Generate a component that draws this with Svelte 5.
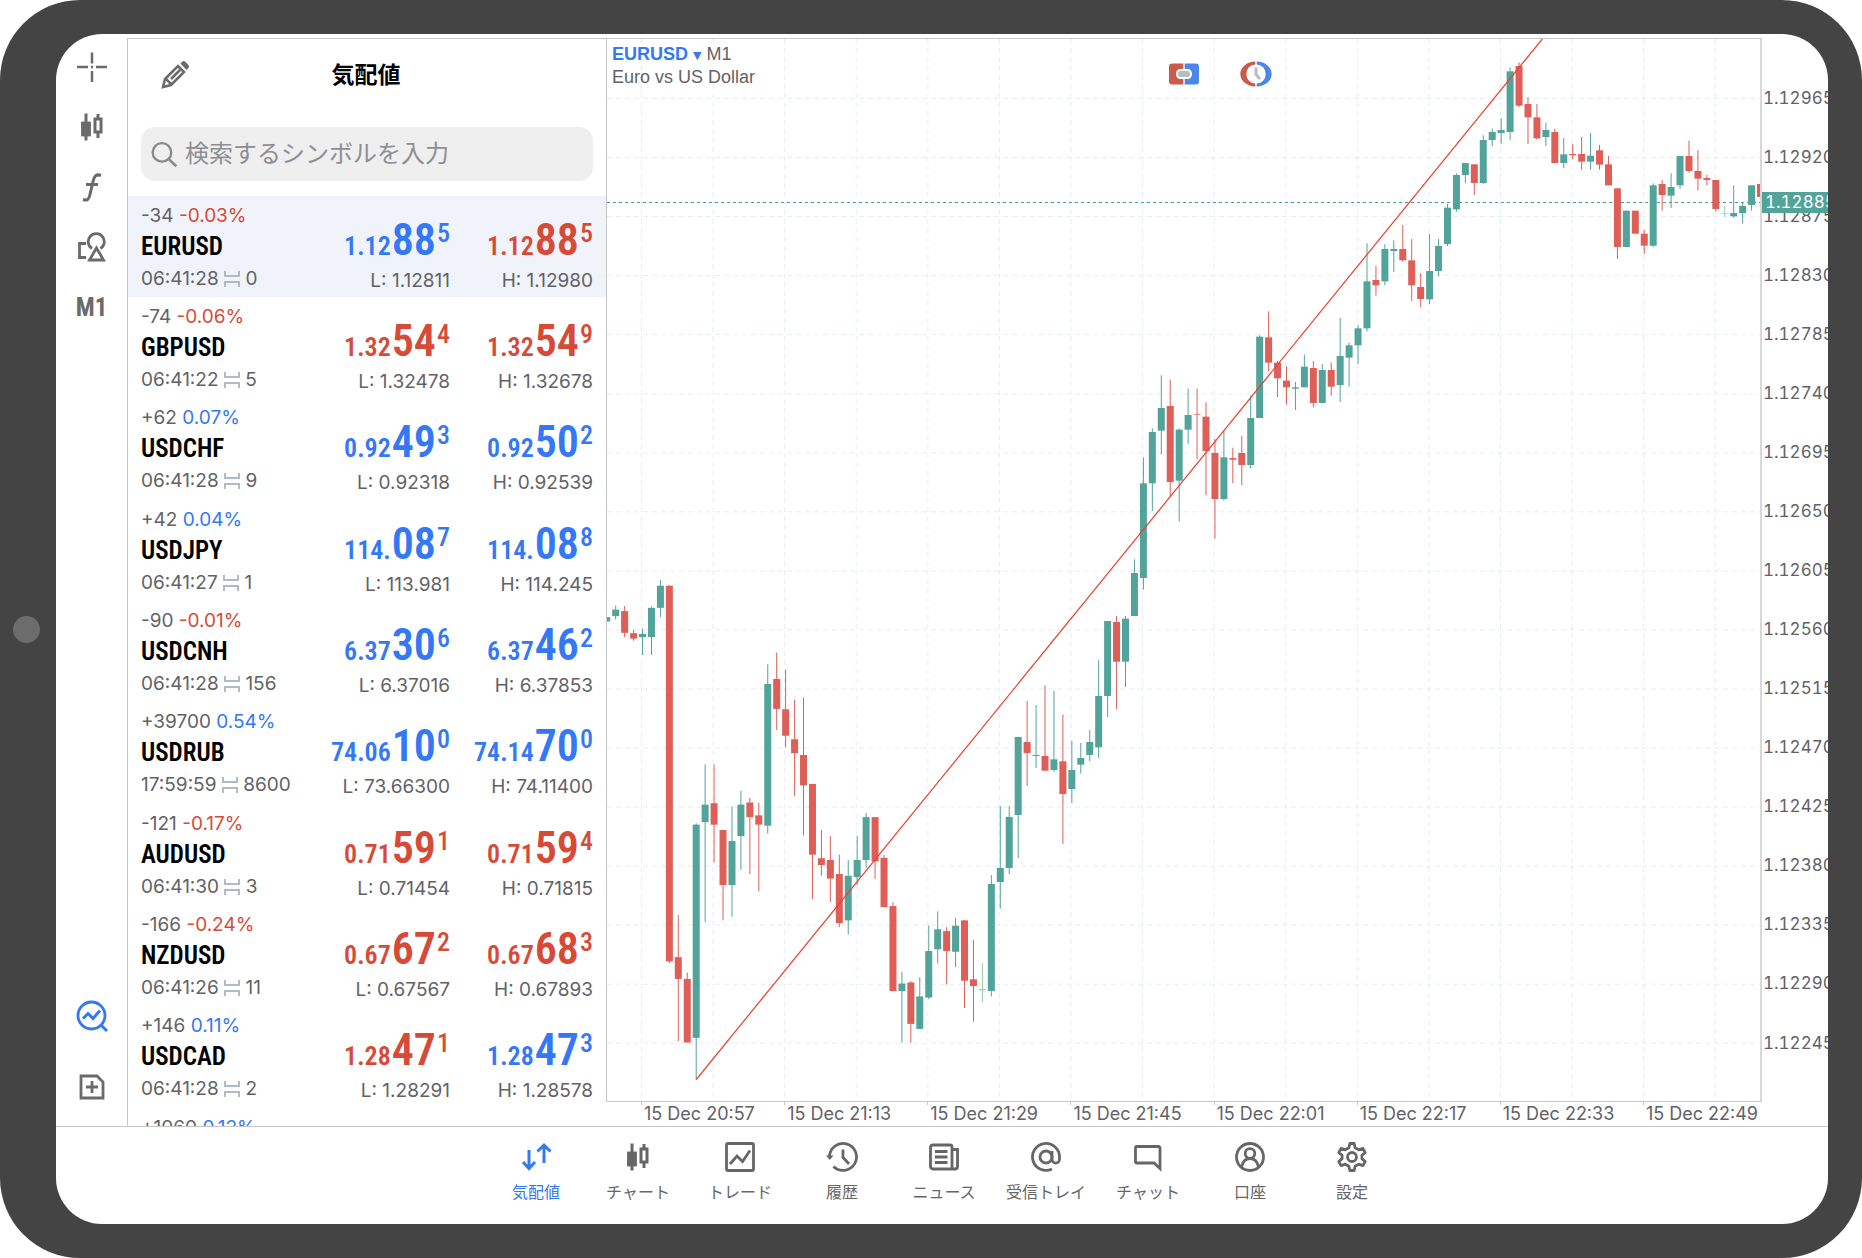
<script lang="ts">
  type Price = [string, string, string, string];
  type Quote = {
    points: string; pct: string; symbol: string; time: string; spread: string;
    bid: Price; ask: Price; low: string; high: string;
  };

  // Price tuples: prefix, large digits, raised digit, direction
  const quotes: Quote[] = [
    { points: '-34', pct: '-0.03%', symbol: 'EURUSD', time: '06:41:28', spread: '0', bid: ['1.12', '88', '5', 'up'], ask: ['1.12', '88', '5', 'down'], low: '1.12811', high: '1.12980' },
    { points: '-74', pct: '-0.06%', symbol: 'GBPUSD', time: '06:41:22', spread: '5', bid: ['1.32', '54', '4', 'down'], ask: ['1.32', '54', '9', 'down'], low: '1.32478', high: '1.32678' },
    { points: '+62', pct: '0.07%', symbol: 'USDCHF', time: '06:41:28', spread: '9', bid: ['0.92', '49', '3', 'up'], ask: ['0.92', '50', '2', 'up'], low: '0.92318', high: '0.92539' },
    { points: '+42', pct: '0.04%', symbol: 'USDJPY', time: '06:41:27', spread: '1', bid: ['114.', '08', '7', 'up'], ask: ['114.', '08', '8', 'up'], low: '113.981', high: '114.245' },
    { points: '-90', pct: '-0.01%', symbol: 'USDCNH', time: '06:41:28', spread: '156', bid: ['6.37', '30', '6', 'up'], ask: ['6.37', '46', '2', 'up'], low: '6.37016', high: '6.37853' },
    { points: '+39700', pct: '0.54%', symbol: 'USDRUB', time: '17:59:59', spread: '8600', bid: ['74.06', '10', '0', 'up'], ask: ['74.14', '70', '0', 'up'], low: '73.66300', high: '74.11400' },
    { points: '-121', pct: '-0.17%', symbol: 'AUDUSD', time: '06:41:30', spread: '3', bid: ['0.71', '59', '1', 'down'], ask: ['0.71', '59', '4', 'down'], low: '0.71454', high: '0.71815' },
    { points: '-166', pct: '-0.24%', symbol: 'NZDUSD', time: '06:41:26', spread: '11', bid: ['0.67', '67', '2', 'down'], ask: ['0.67', '68', '3', 'down'], low: '0.67567', high: '0.67893' },
    { points: '+146', pct: '0.11%', symbol: 'USDCAD', time: '06:41:28', spread: '2', bid: ['1.28', '47', '1', 'down'], ask: ['1.28', '47', '3', 'up'], low: '1.28291', high: '1.28578' }
  ];
  const nextQuote = { points: '+1060', pct: '0.12%' };

  const priceTicks = Array.from({ length: 17 }, (_, i) => (1.12965 - i * 0.00045).toFixed(5));
  const timeTicks = ['20:57', '21:13', '21:29', '21:45', '22:01', '22:17', '22:33', '22:49'];

  // Candle series: each chunk has its own vertical base and resolution.
  // A bar is colour (G/R/L) followed by high, body top, body bottom, low.
  const chunks = [
    { base: 501, unit: 2.8, bars: `G216,216,228,228 G184,195,213,223 R185,199,260,272 R252,261,276,282 G248,263,272,322 G186,190,272,322 G112,128,190,216 R127,128,1180,1185 R1050,1168,1229,1403 R1211,1229,1407,1407 G793,797,1394,1511 G628,741,790,1070 R628,737,797,903 R812,812,966,1065 G746,843,966,1055 G702,741,829,924 R722,735,776,935 R735,771,797,984 G348,403,800,822 R315,389,473,532 R363,474,548,581 R447,558,597,717 R441,602,687,827 R683,683,881,1006 R812,891,910,940 R829,896,948,1014 R881,935,1073,1084 G896,940,1065,1105 G829,896,944,966 G764,776,896,918 R776,776,900,949 R882,890,1028,1028 R1014,1025,1263,1263 G1209,1242,1263,1408 R1235,1239,1355,1408 G1224,1278,1369,1369 G1079,1151,1281,1286 G1040,1090,1146,1186 R1084,1095,1151,1245 G1058,1080,1153,1196 R1065,1065,1234,1310 R1119,1230,1249,1349 L1185,1258,1261,1293 G938,963,1263,1278` },
    { base: 601, unit: 3, bars: `G498,684,726,806 G498,531,684,702 G291,291,525,654 R183,306,339,438 G195,345,348,384 R136,348,392,392 G152,358,390,396 R223,364,462,612 G302,390,447,489 G309,354,374,401 G270,306,345,364 G60,168,322,354` },
    { base: 251, unit: 3, bars: `G993,993,1218,1281 R978,996,1115,1258 G978,986,1115,1191 G808,849,978,978 G502,580,864,899 G415,426,580,663 G256,354,422,494 R269,348,576,619 G415,419,572,695 G296,375,419,462 R296,373,375,508 R337,380,483,616 R447,489,627,746 G422,502,627,632 R473,504,509,580 R438,489,525,585 G316,384,525,535 G136,140,384,384 R64,142,218,245 R213,218,265,321 R229,272,292,344 G276,292,296,360 G194,230,292,292 R213,234,339,352 G222,240,339,339 R217,240,290,317 G84,198,285,336 G158,166,203,290 G105,115,166,222` },
    { base: -9, unit: 3, bars: `G640,754,895,904 R708,750,766,797 G643,657,754,766 G631,657,663,726 R585,657,691,695 R627,691,766,813 R730,771,807,832 G612,723,808,822 G627,648,723,739 G522,533,642,648 G430,435,538,545 G399,399,435,460 R403,403,459,495 G316,330,459,462 G296,306,330,348 G264,300,309,341 G112,124,306,330 R97,108,227,231 R202,222,262,342 R222,262,325,329 G278,300,321,348 R296,306,399,399 G324,373,399,415 R341,372,376,388 R321,372,395,419 G309,377,395,419 R345,361,404,419 R378,403,466,466 R475,475,651,687 G542,542,651,651 R542,542,611,611 R600,611,647,672 G460,466,647,651 R450,462,495,542 G430,471,497,534 G378,378,466,476 R332,378,423,428 R361,423,446,482 R435,444,450,466 R450,450,537,544 L527,549,551,560 G466,549,559,563 G516,528,549,581 G466,466,525,542 R462,462,501,501` }
  ];

  const tones: Record<string, string> = { G: 'rise', R: 'fall', L: 'flat' };
  const candles = chunks
    .flatMap(({ base, unit, bars }) =>
      bars.split(' ').map((bar) => ({
        tone: tones[bar[0]],
        y: bar.slice(1).split(',').map((v) => base + Number(v) / unit)
      }))
    )
    .map((c, i) => ({ ...c, x: 8.7 + (i - 1) * 8.944 }));

  const gridX = Array.from({ length: 16 }, (_, i) => 34.5 + i * 71.58);
  const gridY = Array.from({ length: 17 }, (_, i) => 59.5 + i * 59.05);
  const current = { label: '1.12885', top: 163.5 };

  const tabs = [
    { id: 'quotes', label: '気配値' },
    { id: 'chart', label: 'チャート' },
    { id: 'trade', label: 'トレード' },
    { id: 'history', label: '履歴' },
    { id: 'news', label: 'ニュース' },
    { id: 'mail', label: '受信トレイ' },
    { id: 'chat', label: 'チャット' },
    { id: 'account', label: '口座' },
    { id: 'settings', label: '設定' }
  ];

  let selected = $state('EURUSD');
  let activeTab = $state('quotes');
  let query = $state('');
</script>

{#snippet candlesIcon()}
  <svg class="icon" viewBox="0 0 32 32" aria-hidden="true">
    <path d="M10 2.500v27M22 3v24" stroke-width="3" />
    <rect class="solid" x="6.500" y="12" width="7" height="12" />
    <rect class="paper" x="19" y="8" width="6" height="13" stroke-width="3" />
  </svg>
{/snippet}

{#snippet price(p: Price)}
  <span class="price {p[3]}"><span>{p[0]}</span><b>{p[1]}</b><sup>{p[2]}</sup></span>
{/snippet}

{#snippet change(points: string, pct: string)}
  <span class="change">{points} <span class={pct.startsWith('-') ? 'down' : 'up'}>{pct}</span></span>
{/snippet}

<div class="device">
  <span class="home"></span>
  <div class="screen">
    <div class="workspace">
      <nav class="rail" aria-label="ツール">
        <button aria-label="十字線">
          <svg class="icon" viewBox="0 0 32 32"><path d="M16 1.500v11M16 20v11M1 16h11M20 16h11M15 16h2" stroke-width="2.500" /></svg>
        </button>
        <button aria-label="チャート種別">{@render candlesIcon()}</button>
        <button aria-label="インディケータ">
          <svg class="icon" viewBox="0 0 32 32"><path d="M25 4.500c-5-2-7 1-8 6l-3 13c-1 5-3 6.500-7 5M10 13.500h12" stroke-width="3" /></svg>
        </button>
        <button aria-label="オブジェクト">
          <svg class="icon" viewBox="0 0 32 32"><path d="M10 12.500H3.500v14H10M16 17.500a8 8 0 1 1 8.500 0M20.500 17l-7 12h14z" stroke-width="2.800" /></svg>
        </button>
        <button class="period">M1</button>
        <span class="spacer"></span>
        <button class="tall active" aria-label="気配値表示">
          <svg class="icon" viewBox="0 0 32 32"><circle cx="15.500" cy="15.500" r="13.500" stroke-width="2.800" /><path d="M7 18.500l5-5 5 5 7-8M25 25l6 6" stroke-width="3" /></svg>
        </button>
        <button class="tall" aria-label="新規注文">
          <svg class="icon" viewBox="0 0 32 32"><path d="M5 5h16l6 6v16H5zM16 10v12M10 16h12" stroke-width="2.800" /></svg>
        </button>
      </nav>

      <section class="watch">
        <header>
          <button class="edit" aria-label="編集">
            <svg class="icon" viewBox="0 0 32 32">
              <path d="M4 28l2-8L19 7l6 6-13 13zM7 20l5 5M12 20l9-9" stroke-width="2.500" />
              <path class="solid" d="M21.500 4.500l2-2q1.500-1 3 .5l3 3q1 1.500 0 3l-2 2z" stroke-width="0" />
            </svg>
          </button>
          <h1>気配値</h1>
        </header>
        <label class="search">
          <svg class="icon" viewBox="0 0 32 32"><circle cx="13" cy="13.500" r="11" /><path d="M21 21.500l9 8.500" stroke-width="3.200" /></svg>
          <input type="search" placeholder="検索するシンボルを入力" aria-label="検索するシンボルを入力" bind:value={query} />
        </label>
        <div class="list">
          {#each quotes as q}
            <button class="quote" class:selected={selected === q.symbol} onclick={() => (selected = q.symbol)}>
              <span class="info">
                {@render change(q.points, q.pct)}
                <strong>{q.symbol}</strong>
                <span class="meta">{q.time}
                  <svg class="gap" viewBox="0 0 16 16" aria-hidden="true"><path d="M1 0v5h14V0M1 16v-5h14v5" /></svg>
                  {q.spread}</span>
              </span>
              <span class="side">{@render price(q.bid)}<span class="range">L: {q.low}</span></span>
              <span class="side">{@render price(q.ask)}<span class="range">H: {q.high}</span></span>
            </button>
          {/each}
          <button class="quote">{@render change(nextQuote.points, nextQuote.pct)}</button>
        </div>
      </section>

      <section class="chart">
        <div class="plot">
          <svg class="canvas" viewBox="0 0 1153 1062" preserveAspectRatio="none" role="img" aria-label="EURUSD M1">
            {#each gridX as x}<line class="grid" x1={x} x2={x} y1="0" y2="1062" />{/each}
            {#each gridY as y}<line class="grid" x1="0" x2="1153" y1={y} y2={y} />{/each}
            <line class="bidline" x1="0" x2="1153" y1={current.top} y2={current.top} />
            {#each candles as c}
              <g class={c.tone}>
                <line x1={c.x} x2={c.x} y1={c.y[0]} y2={c.y[3]} />
                <rect x={c.x - 3.5} y={c.y[1]} width="7" height={c.y[2] - c.y[1]} />
              </g>
            {/each}
            <line class="trend" x1="89.300" y1="1040.500" x2="935.300" y2="0" />
          </svg>
          <div class="caption">
            <p><button class="pair">EURUSD <i>▼</i></button> M1</p>
            <p>Euro vs US Dollar</p>
          </div>
          <div class="actions">
            <button aria-label="ワンクリック取引">
              <svg width="32" height="26" viewBox="0 0 32 26">
                <path class="sell" d="M15.300 2.500H4a3 3 0 0 0-3 3v15a3 3 0 0 0 3 3h11.300z" />
                <path class="buy" d="M16.700 2.500H28a3 3 0 0 1 3 3v15a3 3 0 0 1-3 3H16.700z" />
                <rect class="pill" x="9" y="9" width="14" height="8" rx="3.500" />
              </svg>
            </button>
            <button aria-label="取引履歴表示">
              <svg width="32" height="26" viewBox="0 0 32 26">
                <path class="sell" d="M15.300 .5a15 12.500 0 0 0 0 25v-3a9 9.500 0 0 1 0-19z" />
                <path class="buy" d="M16.700 .5a15 12.500 0 0 1 0 25v-3a9 9.500 0 0 0 0-19z" />
                <path class="hand" d="M16 6.500v7l4 4.500" />
              </svg>
            </button>
          </div>
        </div>
        <div class="prices">
          {#each priceTicks as p}<span>{p}</span>{/each}
          <output style="top: {(current.top / 1062) * 100}%">{current.label}</output>
        </div>
        <div class="times">
          {#each timeTicks as t}<span>15 Dec {t}</span>{/each}
        </div>
      </section>
    </div>

    <nav class="tabs" aria-label="メイン">
      {#each tabs as tab}
        <button class:active={activeTab === tab.id} onclick={() => (activeTab = tab.id)}>
          {#if tab.id === 'chart'}
            {@render candlesIcon()}
          {:else}
            <svg class="icon" viewBox="0 0 32 32" aria-hidden="true">
              {#if tab.id === 'quotes'}
                <path d="M9 9v18.500M3 21l6 6.500 6-6.500M24 22V4M17.500 10.500L24 4l6.500 6.500" stroke-width="3" />
              {:else if tab.id === 'trade'}
                <rect x="2.500" y="2.500" width="27" height="27" rx="1.500" /><path d="M6 23l7-8 5.500 5.500L26 9.500" />
              {:else if tab.id === 'history'}
                <path d="M3.500 16A13.500 13.500 0 1 1 7.500 25.500M17 8.500v8l6 6.500" /><path class="solid" d="M0 14.500h7.500l-3.700 4.500z" stroke-width="0" />
              {:else if tab.id === 'news'}
                <path d="M5 4h17a2 2 0 0 1 2 2v22H5a2.500 2.500 0 0 1-2.500-2.500v-19A2.500 2.500 0 0 1 5 4zM24 8.500h5.500v17A2.500 2.500 0 0 1 27 28h-4M7 10.500h12.500M7 16h12.500M7 21.500h12.500" />
              {:else if tab.id === 'mail'}
                <path d="M22 28a13.500 13.500 0 1 1 7.500-12v2c0 5.500-7.500 5.500-7.500 0V10" /><circle cx="16" cy="16" r="6" />
              {:else if tab.id === 'chat'}
                <path d="M5 5.500h21.500a1.500 1.500 0 0 1 1.500 1.500v20.500l-6-5.500H5A1.500 1.500 0 0 1 3.500 20.500V7A1.500 1.500 0 0 1 5 5.500z" />
              {:else if tab.id === 'account'}
                <circle cx="16" cy="16" r="13.500" /><circle cx="16" cy="12.500" r="4.800" /><path d="M7.500 26c1-5 4-8.500 8.500-8.500s7.500 3.500 8.500 8.500" />
              {:else}
                <circle cx="16" cy="16" r="4.500" />
                <path stroke-linejoin="round" d="M13.800 2.500h4.400l.9 4.300 3.600 2 4.200-1.400 2.300 4-3.300 3v3.200l3.300 3-2.300 4-4.200-1.400-3.600 2-.9 4.300h-4.400l-.9-4.300-3.600-2-4.200 1.400-2.300-4 3.300-3v-3.200l-3.300-3 2.300-4 4.200 1.400 3.600-2z" />
              {/if}
            </svg>
          {/if}
          <span>{tab.label}</span>
        </button>
      {/each}
    </nav>
  </div>
</div>

<style>
  :global(body) { margin: 0; background: #fff; }
  * { box-sizing: border-box; }

  .device {
    --up: #3478f6;
    --down: #d64b38;
    --ink: #626266;
    --line: #c6c6c8;
    position: relative;
    height: 100vh;
    padding: 34px 34px 34px 56px;
    border-radius: 80px;
    background: #444;
    font-family: Inter, "Noto Sans CJK JP", sans-serif;
    color: var(--ink);
  }
  .home {
    position: absolute;
    left: 13px;
    top: 50%;
    width: 27px;
    height: 27px;
    margin-top: -13px;
    border-radius: 50%;
    background: #6c6c6c;
  }
  .screen {
    display: flex;
    flex-direction: column;
    height: 100%;
    overflow: hidden;
    border-radius: 46px;
    background: #fff;
  }
  .workspace { display: flex; flex: 1; min-height: 0; }

  button {
    padding: 0;
    border: 0;
    background: none;
    color: inherit;
    font: inherit;
    cursor: pointer;
  }
  .icon {
    width: 32px;
    height: 32px;
    fill: none;
    stroke: currentColor;
    stroke-width: 2.8;
  }
  .icon .solid { fill: currentColor; }
  .icon .paper { fill: #fff; }
  .up { color: var(--up); }
  .down { color: var(--down); }

  .rail {
    display: flex;
    flex-direction: column;
    width: 71px;
    padding: 3px 0 4px;
    color: #6a6a6a;
  }
  .rail button {
    display: grid;
    place-items: center;
    flex: 0 0 60px;
  }
  .rail .tall { flex-basis: 71px; }
  .rail .active { color: var(--up); }
  .rail .period { font: bold 25px "Roboto Condensed", "Liberation Sans Narrow", sans-serif; }
  .spacer { flex: 1; }

  .watch {
    display: flex;
    flex-direction: column;
    width: 479px;
    margin-top: 4px;
    border: 1px solid var(--line);
    border-width: 1px 0 0 1px;
  }
  header {
    display: grid;
    grid-template-columns: 66px 1fr 68px;
    align-items: center;
    height: 72px;
    padding: 0 14px;
  }
  h1 {
    margin: 0;
    color: #000;
    font-size: 23px;
    line-height: 32px;
    text-align: center;
  }
  .edit { display: grid; place-items: center; color: #6a6a6a; }
  .search {
    display: flex;
    align-items: center;
    gap: 7px;
    height: 54px;
    margin: 16px 13px 15px;
    padding: 0 10px;
    border-radius: 14px;
    background: #efeff0;
    color: #8a8a8e;
  }
  .search .icon { width: 27px; height: 27px; }
  input {
    flex: 1;
    min-width: 0;
    padding: 0;
    border: 0;
    outline: 0;
    background: none;
    font: 24px/32px Inter, "Noto Sans CJK JP", sans-serif;
  }
  input::placeholder { color: #8e8e92; opacity: 1; }

  .list {
    display: grid;
    grid-auto-rows: 101px 101px 102px;
    flex: 1;
    min-height: 0;
    overflow: hidden;
  }
  .quote {
    display: grid;
    grid-template-columns: 1fr auto 143px;
    padding: 8px 13px 0;
    font-size: 19px;
    line-height: 24px;
    text-align: left;
    align-items: start;
  }
  .quote.selected { background: #f0f3f9; }
  .info, .side { display: flex; flex-direction: column; }
  .side { align-items: flex-end; }
  .change { height: 27px; }
  strong {
    height: 36px;
    color: #000;
    font: 600 25px/32px "Roboto Condensed", "Liberation Sans Narrow", sans-serif;
  }
  .meta { white-space: nowrap; }
  .gap {
    width: 16px;
    height: 16px;
    fill: none;
    stroke: #b4bac2;
    stroke-width: 2;
    vertical-align: -2px;
  }
  .price {
    height: 65px;
    font: 600 26px/72px "Roboto Condensed", "Liberation Sans Narrow", sans-serif;
    white-space: nowrap;
  }
  .price b { font-size: 44px; font-weight: 600; margin: 0 1px; }
  .price sup { font-size: 26px; font-weight: 500; line-height: 0; vertical-align: 13px; }

  .chart {
    display: grid;
    grid-template: 1fr 24px / 1fr 66px;
    flex: 1;
    min-width: 0;
    min-height: 0;
    padding-top: 4px;
  }
  .plot {
    position: relative;
    min-height: 0;
    border: 1px solid var(--line);
    border-right: 2px solid #d8d8d8;
  }
  .canvas { position: absolute; inset: 0; width: 100%; height: 100%; }
  .grid { stroke: #e6eef2; stroke-dasharray: 5 4; }
  .bidline { stroke: #46a094; stroke-dasharray: 3 3; }
  .trend { stroke: #e8402f; stroke-width: 1.2; }
  .rise { fill: #52a399; stroke: #52a399; }
  .fall { fill: #dd5f57; stroke: #dd5f57; }
  .flat { fill: #93cba4; stroke: #93cba4; }
  g rect { stroke: none; }

  .caption {
    position: absolute;
    left: 5px;
    top: 4px;
    font: 18px/23px "Liberation Sans", Arial, sans-serif;
  }
  p { margin: 0; }
  .pair { color: var(--up); font-weight: bold; }
  .pair i { font: 11px "DejaVu Sans", sans-serif; vertical-align: 1px; }
  .actions { position: absolute; top: 22px; left: 561px; display: flex; gap: 40px; }
  .actions svg { display: block; }
  .sell { fill: #cb5a48; }
  .buy { fill: #4c86ea; }
  .pill { fill: #b4bcc4; stroke: #fff; stroke-width: 2; }
  .hand { fill: none; stroke: #b4bcc4; stroke-width: 3; }

  .prices {
    position: relative;
    display: flex;
    flex-direction: column;
    padding: 30px 0 30px;
    overflow: hidden;
    font-size: 17px;
    font-variant-numeric: tabular-nums;
  }
  .prices span { display: flex; flex: 1; align-items: center; gap: 1px; }
  .prices span::before { content: ""; width: 2px; height: 1px; background: var(--line); }
  output {
    position: absolute;
    left: 0;
    right: 0;
    height: 21px;
    margin-top: -10px;
    padding-left: 3px;
    background: #52a399;
    color: #fff;
    line-height: 21px;
  }
  .times {
    grid-column: 1 / -1;
    display: grid;
    grid-template-columns: repeat(8, 1fr);
    padding: 0 42px 0 35px;
    font-size: 18px;
    line-height: 24px;
    white-space: nowrap;
  }
  .times span { padding-left: 2px; border-left: 1px solid transparent; border-image: linear-gradient(var(--line) 4px, transparent 4px) 1; }

  .tabs {
    display: flex;
    justify-content: center;
    height: 98px;
    padding-left: 4px;
    border-top: 1px solid var(--line);
    color: #666;
    font-size: 16px;
    line-height: 24px;
  }
  .tabs button {
    display: flex;
    flex-direction: column;
    align-items: center;
    gap: 7px;
    width: 102px;
    padding-top: 14px;
    white-space: nowrap;
  }
  .tabs .active { color: var(--up); }
</style>
